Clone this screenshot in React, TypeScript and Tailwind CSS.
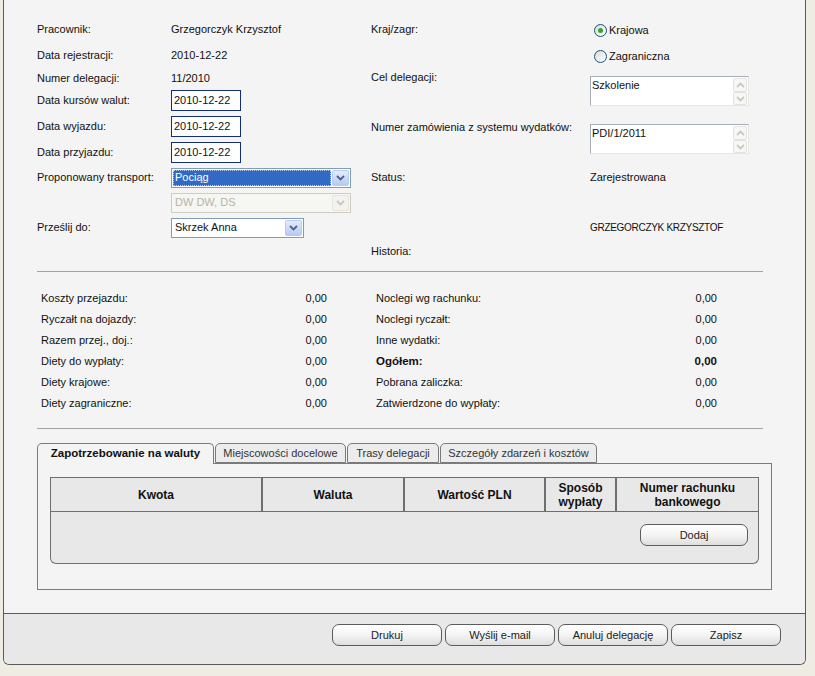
const SUMMARY_LEFT = [
  { label: 'Koszty przejazdu:', value: '0,00' },
  { label: 'Ryczałt na dojazdy:', value: '0,00' },
  { label: 'Razem przej., doj.:', value: '0,00' },
  { label: 'Diety do wypłaty:', value: '0,00' },
  { label: 'Diety krajowe:', value: '0,00' },
  { label: 'Diety zagraniczne:', value: '0,00' },
];

const SUMMARY_RIGHT = [
  { label: 'Noclegi wg rachunku:', value: '0,00' },
  { label: 'Noclegi ryczałt:', value: '0,00' },
  { label: 'Inne wydatki:', value: '0,00' },
  { label: 'Ogółem:', value: '0,00', bold: true },
  { label: 'Pobrana zaliczka:', value: '0,00' },
  { label: 'Zatwierdzone do wypłaty:', value: '0,00' },
];

const TABS = [
  { title: 'Zapotrzebowanie na waluty', width: 'w-[177px]', active: true },
  { title: 'Miejscowości docelowe', width: 'w-[131px]' },
  { title: 'Trasy delegacji', width: 'w-[92px]' },
  { title: 'Szczegóły zdarzeń i kosztów', width: 'w-[157px]' },
];

function Chevron({ up = false, color }: { up?: boolean; color: string }) {
  return (
    <svg width="9" height="6" viewBox="0 0 9 6" aria-hidden="true">
      <path
        d={up ? 'M1 5 L4.5 1.5 L8 5' : 'M1 1 L4.5 4.5 L8 1'}
        fill="none"
        stroke={color}
        strokeWidth="1.8"
      />
    </svg>
  );
}

function DateInput({ value }: { value: string }) {
  return (
    <div className="w-[70px] h-[21px] border border-[#132f7c] bg-white pl-[2px] flex items-center">
      {value}
    </div>
  );
}

function Combo({
  value,
  width,
  selected = false,
  disabled = false,
}: {
  value: string;
  width: string;
  selected?: boolean;
  disabled?: boolean;
}) {
  return (
    <div
      className={`${width} h-[20px] border flex items-stretch p-[1px] ${
        disabled ? 'border-[#cfcdc1] bg-[#f6f6f3]' : 'border-[#7f9db9] bg-white'
      }`}
    >
      <div className="flex-1 flex items-center pr-[1px]">
        <span
          className={`flex-1 h-full flex items-center pl-[2px] ${
            selected
              ? 'bg-[#316ac5] text-white outline-1 outline-dotted outline-[#b7c8ea] -outline-offset-1'
              : disabled
                ? 'text-[#b6b4a8]'
                : ''
          }`}
        >
          {value}
        </span>
      </div>
      <div
        className={`w-[17px] rounded-[2px] border flex items-center justify-center ${
          disabled
            ? 'border-[#e6e5de] bg-[#f3f2ee]'
            : 'border-[#b9cbf3] bg-gradient-to-b from-[#e4ebfd] to-[#b7c9f4]'
        }`}
      >
        <Chevron color={disabled ? '#c8c7c0' : '#4d6185'} />
      </div>
    </div>
  );
}

function TextArea({ value }: { value: string }) {
  return (
    <div className="w-[159px] h-[30px] border border-[#a7aeb8] border-b-[#e6e6e6] border-r-[#e6e6e6] bg-white flex">
      <div className="flex-1 pl-[1px] pt-[2px]">{value}</div>
      <div className="w-[15px] flex flex-col pr-[1px] pt-[1px]">
        <div className="h-[14px] border border-[#e3e3df] bg-[#f7f7f5] rounded-[2px] flex items-center justify-center">
          <Chevron up color="#c9c9c4" />
        </div>
        <div className="h-[13px] border border-[#e3e3df] bg-[#f7f7f5] rounded-[2px] flex items-center justify-center">
          <Chevron color="#c9c9c4" />
        </div>
      </div>
    </div>
  );
}

function Radio({ label, checked = false }: { label: string; checked?: boolean }) {
  return (
    <div className="flex items-center gap-[2px]">
      <span className="w-[13px] h-[13px] rounded-full border border-[#1c5180] bg-gradient-to-br from-[#dcdbd5] to-white flex items-center justify-center">
        {checked && <span className="w-[5px] h-[5px] rounded-full bg-[#31a531]" />}
      </span>
      <span>{label}</span>
    </div>
  );
}

function XpButton({ label, width }: { label: string; width: string }) {
  return (
    <button
      type="button"
      className={`${width} h-[22px] rounded-[7px] border border-[#5c5c5c] bg-gradient-to-b from-white via-[#f4f4f4] to-[#dedede] text-[11px] text-[#222]`}
    >
      {label}
    </button>
  );
}

export default function App() {
  return (
    <div className="w-[815px] h-[676px] bg-[#efede3] font-['Liberation_Sans',Arial,sans-serif] text-[11px] leading-[13px] text-[#111]">
      <div className="ml-[3px] w-[803px] h-[665px] border border-t-0 border-[#5a5a5a] rounded-b-[6px] bg-[#f4f4f4] flex flex-col overflow-hidden">
        <div className="flex-1 pl-[33px] pt-[16px]">
          {/* form */}
          <div className="flex">
            <div className="w-[334px] flex flex-col">
              <div className="h-[26px] flex items-center">
                <span className="w-[134px]">Pracownik:</span>
                <span>Grzegorczyk Krzysztof</span>
              </div>
              <div className="h-[26px] flex items-center">
                <span className="w-[134px]">Data rejestracji:</span>
                <span>2010-12-22</span>
              </div>
              <div className="h-[20px] flex items-center">
                <span className="w-[134px]">Numer delegacji:</span>
                <span>11/2010</span>
              </div>
              <div className="h-[25px] flex items-center">
                <span className="w-[134px]">Data kursów walut:</span>
                <DateInput value="2010-12-22" />
              </div>
              <div className="h-[26px] flex items-center">
                <span className="w-[134px]">Data wyjazdu:</span>
                <DateInput value="2010-12-22" />
              </div>
              <div className="h-[26px] flex items-center">
                <span className="w-[134px]">Data przyjazdu:</span>
                <DateInput value="2010-12-22" />
              </div>
              <div className="h-[25px] flex items-center">
                <span className="w-[134px]">Proponowany transport:</span>
                <Combo value="Pociąg" width="w-[180px]" selected />
              </div>
              <div className="h-[25px] flex items-center">
                <span className="w-[134px]" />
                <Combo value="DW DW, DS" width="w-[180px]" disabled />
              </div>
              <div className="h-[25px] flex items-center">
                <span className="w-[134px]">Prześlij do:</span>
                <Combo value="Skrzek Anna" width="w-[133px]" />
              </div>
            </div>

            <div className="flex-1 flex flex-col">
              <div className="h-[26px] flex items-center">
                <span className="w-[219px]">Kraj/zagr:</span>
                <div className="pl-[4px] pt-[3px]">
                  <Radio label="Krajowa" checked />
                </div>
              </div>
              <div className="h-[26px] flex items-center">
                <span className="w-[219px]" />
                <div className="pl-[4px] pt-[2px]">
                  <Radio label="Zagraniczna" />
                </div>
              </div>
              <div className="h-[50px] flex items-start">
                <span className="w-[219px] pt-[3px]">Cel delegacji:</span>
                <div className="mt-[8px]">
                  <TextArea value="Szkolenie" />
                </div>
              </div>
              <div className="h-[47px] flex items-start">
                <span className="w-[219px] pt-[3px]">Numer zamówienia z systemu wydatków:</span>
                <div className="mt-[6px]">
                  <TextArea value="PDI/1/2011" />
                </div>
              </div>
              <div className="h-[25px] flex items-center">
                <span className="w-[219px]">Status:</span>
                <span>Zarejestrowana</span>
              </div>
              <div className="h-[25px]" />
              <div className="h-[25px] flex items-center">
                <span className="w-[219px]" />
                <span className="text-[10px] tracking-[-0.3px]">GRZEGORCZYK KRZYSZTOF</span>
              </div>
              <div className="h-[22px] flex items-center">
                <span>Historia:</span>
              </div>
            </div>
          </div>

          <div className="mt-[9px] h-px w-[726px] bg-[#a3a3a3]" />

          {/* summary */}
          <div className="mt-[16px] ml-[4px] flex">
            <div className="w-[286px] flex flex-col">
              {SUMMARY_LEFT.map((row) => (
                <div key={row.label} className="h-[21px] flex items-center justify-between">
                  <span>{row.label}</span>
                  <span>{row.value}</span>
                </div>
              ))}
            </div>
            <div className="ml-[49px] w-[341px] flex flex-col">
              {SUMMARY_RIGHT.map((row) => (
                <div
                  key={row.label}
                  className={`h-[21px] flex items-center justify-between ${row.bold ? 'font-bold text-[11.5px]' : ''}`}
                >
                  <span>{row.label}</span>
                  <span>{row.value}</span>
                </div>
              ))}
            </div>
          </div>

          <div className="mt-[14px] h-px w-[726px] bg-[#a3a3a3]" />

          {/* tabs */}
          <div className="mt-[14px] flex gap-[1px] items-end">
            {TABS.map((tab) => (
              <div
                key={tab.title}
                className={`${tab.width} rounded-t-[5px] border border-[#7b7b7b] flex items-center justify-center ${
                  tab.active
                    ? 'h-[21px] -mb-px border-b-0 bg-[#f4f4f4] font-bold text-[11.5px] relative z-10 pb-[1px]'
                    : 'h-[20px] bg-[#ececec] text-[#333]'
                }`}
              >
                {tab.title}
              </div>
            ))}
          </div>
          <div className="w-[735px] h-[127px] border border-[#7b7b7b] pl-[12px] pt-[13px]">
            <div className="w-[709px]">
              <div className="h-[35px] flex border border-[#6f6f6f] bg-[#e8e8e8] font-bold text-[12px] leading-[14px] text-center">
                <div className="w-[212px] border-r-2 border-[#6f6f6f] flex items-center justify-center">Kwota</div>
                <div className="w-[142px] border-r-2 border-[#6f6f6f] flex items-center justify-center">Waluta</div>
                <div className="w-[141px] border-r-2 border-[#6f6f6f] flex items-center justify-center">Wartość PLN</div>
                <div className="w-[71px] border-r-2 border-[#6f6f6f] flex items-center justify-center">
                  Sposób
                  <br />
                  wypłaty
                </div>
                <div className="flex-1 flex items-center justify-center">
                  Numer rachunku
                  <br />
                  bankowego
                </div>
              </div>
              <div className="h-[52px] border border-t-0 border-[#6f6f6f] rounded-b-[6px] bg-[#e8e8e8] flex justify-end items-start pt-[12px] pr-[10px]">
                <XpButton label="Dodaj" width="w-[108px]" />
              </div>
            </div>
          </div>
        </div>

        <div className="h-[51px] border-t border-[#5a5a5a] bg-[#e8e8e8] flex justify-end items-start gap-[3px] pt-[10px] pr-[24px]">
          <XpButton label="Drukuj" width="w-[110px]" />
          <XpButton label="Wyślij e-mail" width="w-[110px]" />
          <XpButton label="Anuluj delegację" width="w-[110px]" />
          <XpButton label="Zapisz" width="w-[110px]" />
        </div>
      </div>
    </div>
  );
}
